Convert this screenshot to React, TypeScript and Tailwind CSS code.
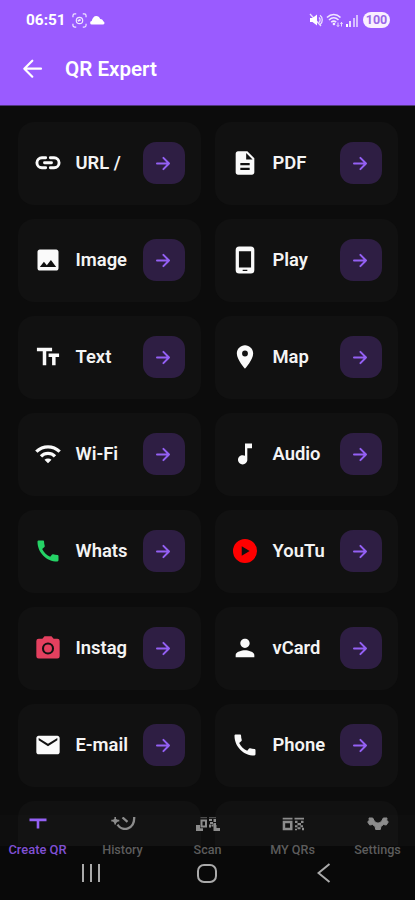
import type { ComponentType } from "react";
import {
  MdDescription,
  MdImage,
  MdTextFields,
  MdLocationOn,
  MdWifi,
  MdMusicNote,
  MdCall,
  MdPerson,
  MdMail,
} from "react-icons/md";

type Icon = ComponentType<{ className?: string }>;
type Item = { label: string; icon: Icon; color?: string };

function LinkIcon({ className }: { className?: string }) {
  return (
    <svg className={className} viewBox="0 0 24 24" fill="none" stroke="currentColor" strokeWidth="2.500" strokeLinecap="round">
      <path d="M10 7.500H6.800a4.300 4.300 0 0 0 0 8.600H10M14 7.500h3.200a4.300 4.300 0 0 1 0 8.600H14M9 11.800h6" />
    </svg>
  );
}

function PhoneDeviceIcon({ className }: { className?: string }) {
  return (
    <svg className={className} viewBox="0 0 24 24" fill="currentColor">
      <path fillRule="evenodd" d="M7 .5h10a3 3 0 0 1 3 3v17a3 3 0 0 1-3 3H7a3 3 0 0 1-3-3v-17a3 3 0 0 1 3-3ZM6.800 4.500v13.900h10.400V4.500ZM10 20.300v1.100h4v-1.100Z" />
    </svg>
  );
}

function PlayIcon({ className }: { className?: string }) {
  return (
    <svg className={className} viewBox="0 0 24 24" fill="currentColor">
      <path fillRule="evenodd" d="M12 1.700a10.300 10.300 0 1 0 0 20.600 10.300 10.300 0 0 0 0-20.600ZM9.200 7.900v8.200l6.800-4.100Z" />
    </svg>
  );
}

function CameraIcon({ className }: { className?: string }) {
  return (
    <svg className={className} viewBox="0 0 24 24" fill="currentColor">
      <path fillRule="evenodd" d="M9 2h6l1.800 2H20a2 2 0 0 1 2 2v13a2 2 0 0 1-2 2H4a2 2 0 0 1-2-2V6a2 2 0 0 1 2-2h3.200ZM12 7.200a5.200 5.200 0 1 0 0 10.400 5.200 5.200 0 0 0 0-10.400ZM12 9a3.400 3.400 0 1 1 0 6.800A3.400 3.400 0 0 1 12 9Z" />
    </svg>
  );
}

const items: Item[] = [
  { label: "URL /", icon: LinkIcon },
  { label: "PDF", icon: MdDescription },
  { label: "Image", icon: MdImage },
  { label: "Play", icon: PhoneDeviceIcon },
  { label: "Text", icon: MdTextFields },
  { label: "Map", icon: MdLocationOn },
  { label: "Wi-Fi", icon: MdWifi },
  { label: "Audio", icon: MdMusicNote },
  { label: "Whats", icon: MdCall, color: "text-[#25d366]" },
  { label: "YouTu", icon: PlayIcon, color: "text-[#ff0000]" },
  { label: "Instag", icon: CameraIcon, color: "text-[#e4405f]" },
  { label: "vCard", icon: MdPerson },
  { label: "E-mail", icon: MdMail },
  { label: "Phone", icon: MdCall },
];

function Card({ label, icon: ItemIcon, color = "text-[#fafafa]" }: Item) {
  return (
    <div className="flex h-[83px] items-center rounded-2xl bg-[#111111] pr-4 pl-4">
      <ItemIcon className={`size-[28px] shrink-0 ${color}`} />
      <span className="ml-[14px] flex-1 text-[18.400px] leading-6 font-semibold whitespace-nowrap text-[#f4f4f4]">
        {label}
      </span>
      <span className="flex size-[42px] shrink-0 items-center justify-center rounded-[13px] bg-[#2e1e43]">
        <svg className="size-[21px] text-[#9460f4]" viewBox="0 0 21 21" fill="none" stroke="currentColor" strokeWidth="2" strokeLinecap="round" strokeLinejoin="round">
          <path d="M4 10.500H16M10.400 4.900l5.600 5.600-5.600 5.600" />
        </svg>
      </span>
    </div>
  );
}

function StatusBar() {
  return (
    <div className="flex h-10 items-center pr-[25px] pl-[26px]">
      <span className="text-[15.400px] leading-5 font-bold">06:51</span>
      <svg className="ml-[6px] size-[15px]" viewBox="0 0 16 16" fill="none" stroke="currentColor" strokeOpacity=".85" strokeWidth="1.300">
        <path d="M1 4.500V3a2 2 0 0 1 2-2h1.500M11.500 1H13a2 2 0 0 1 2 2v1.500M15 11.500V13a2 2 0 0 1-2 2h-1.500M4.500 15H3a2 2 0 0 1-2-2v-1.500" />
        <circle cx="8" cy="8" r="3.400" />
        <path d="m6.200 8.500 3-1.500" strokeWidth="2" />
      </svg>
      <svg className="ml-[3px] h-[10px] w-[15px]" viewBox="0 0 15 10" fill="currentColor">
        <path d="M2 9.500a1.700 1.700 0 0 1-.3-3.400C2.400 3 4 1 6.200 1c2 0 3.300 1.300 4 3 2.200.1 2.700 1.200 3 2.300 1.700.4 1.700 3.200 0 3.200Z" />
      </svg>
      <div className="ml-auto flex items-center">
        <svg className="h-[14px] w-[14px]" viewBox="0 0 14 14" fill="currentColor">
          <path d="M1 5h2.500L8 1.500v11L3.500 9H1Z" />
          <path d="M10 4.500c1.500 1.300 1.500 3.700 0 5M11 2.300c3 2 3 7.400 0 9.400M1 1l11 12" fill="none" stroke="currentColor" strokeOpacity=".8" strokeWidth="1.300" />
        </svg>
        <svg className="ml-[3px] h-[14px] w-[18px]" viewBox="0 0 18 14" fill="none" stroke="currentColor" strokeOpacity=".85" strokeWidth="1.600">
          <path d="M1 4.500c4-4 9.500-4 13.500 0M3 7c3-2.800 6.500-2.800 9.500 0M5.200 9.200c1.700-1.400 3.400-1.400 5 0" />
          <path d="M6.400 11 8 9.600 9.500 11 8 12.600Z" fill="currentColor" stroke="none" />
          <path d="M12 9.500v4M10.800 12.300l1.200 1.200 1.200-1.200M15.500 13.500v-4M14.200 10.700l1.300-1.200 1.300 1.200" strokeWidth=".9" />
        </svg>
        <div className="ml-[2px] flex h-[13px] items-end gap-[1.300px]">
          <i className="h-[3px] w-[2px] bg-white" />
          <i className="h-[6px] w-[2px] bg-white/80" />
          <i className="h-[9px] w-[2px] bg-white/60" />
          <i className="h-[12px] w-[2px] bg-white/60" />
        </div>
        <span className="ml-[5px] flex h-4 w-[27px] items-center justify-center rounded-full bg-[#f9efff] text-[12.500px] leading-4 font-bold text-[#9a68e8]">
          100
        </span>
      </div>
    </div>
  );
}

function CreateIcon({ className }: { className?: string }) {
  return (
    <svg className={className} viewBox="0 0 30 16" fill="currentColor">
      <path d="M6.500 1.500h17v2.700h-7.200V11.500h-2.600V4.200H6.500Z" />
    </svg>
  );
}

function HistoryIcon({ className }: { className?: string }) {
  return (
    <svg className={className} viewBox="0 0 30 16" fill="none" stroke="currentColor" strokeWidth="2.300">
      <path d="M9.500 7.600C14.500 15.200 26.800 12.500 26.200 0M14.500.5l5 4.300" />
      <path d="M7.200 0v7.500M3.300 3.600h8" strokeWidth="1.600" />
      <path d="m4 3.600 3.300-2.200 3.300 2.200-3.300 3.500Z" fill="currentColor" stroke="none" />
    </svg>
  );
}

function ScanIcon({ className }: { className?: string }) {
  return (
    <svg className={className} viewBox="0 0 30 16" fill="currentColor">
      <path fillRule="evenodd" d="M7.500 2.500h6.500v8H7.500Zm2 2v4h2.500v-4ZM3 8h4v3.300h3V14H3ZM20.500 8h3v3H27V14h-6.500Z" />
      <path d="M16 2h3v2h-3ZM20.500 2h2.500v3h-2.500ZM17 5h3v2h-3ZM20.500 6H23v2h-2.500ZM16 7.500h2v3h-2ZM18.500 7.500h2v2h-2Z" />
      <path d="M7.500 0H14v1.200H7.500ZM16 0h7v1.200h-7Z" opacity=".5" />
    </svg>
  );
}

function CodesIcon({ className }: { className?: string }) {
  return (
    <svg className={className} viewBox="0 0 30 16" fill="currentColor">
      <path fillRule="evenodd" d="M4.700 3.700h9.800v9.500H4.700Zm2.500 2.500v4.500h4.800V6.200Z" />
      <path d="M4.700.8h9.800v1.700H4.700ZM16.500.8h9.500v1.700h-9.500ZM17 3.800h2.500V6H17ZM23 3.800h2.500V6H23ZM19.500 6H23v2.200h-3.500ZM17 8.200h2.500v2H17ZM22.500 8.200H25v2h-2.500ZM19.500 10.200h3v2h-3ZM17 11.800h2v1.500h-2ZM24 10.700h2v2.500h-2Z" />
    </svg>
  );
}

function SettingsIcon({ className }: { className?: string }) {
  return (
    <svg className={className} viewBox="0 0 30 16" fill="currentColor" stroke="currentColor" strokeLinejoin="round">
      <path d="M6 1h3.700L11.300 4c1.900 2.700 5.500 2.700 7.400 0L20.300 1H24l-.3 2.300 1.600 1.500-2 3.200-2.800-.5-2.600 2-.6 3h-4.600l-.6-3-2.600-2-2.800.5-2-3.200 1.600-1.500Z" />
    </svg>
  );
}

const tabs: { label: string; icon: Icon; active?: boolean }[] = [
  { label: "Create QR", icon: CreateIcon, active: true },
  { label: "History", icon: HistoryIcon },
  { label: "Scan", icon: ScanIcon },
  { label: "MY QRs", icon: CodesIcon },
  { label: "Settings", icon: SettingsIcon },
];

export default function App() {
  return (
    <div className="relative flex h-[900px] w-[415px] flex-col overflow-hidden bg-[#0c0c0c] font-[Roboto,sans-serif] text-white">
      <header className="h-[106px] shrink-0 border-b border-[#51367e] bg-[#9a5bff]">
        <StatusBar />
        <div className="flex h-[57px] items-center pl-5">
          <svg className="size-[26px]" viewBox="0 0 26 26" fill="none" stroke="currentColor" strokeWidth="2.200" strokeLinecap="round" strokeLinejoin="round">
            <path d="M21 12.700H4.500M12.300 4.700l-8 8 8 8" />
          </svg>
          <h1 className="ml-[19px] text-[20.600px] leading-7 font-semibold">QR Expert</h1>
        </div>
      </header>

      <main className="grid h-[740px] shrink-0 auto-rows-[83px] grid-cols-[183px_183px] gap-x-[14px] gap-y-[14px] overflow-hidden pt-[15.500px] pl-[17.500px]">
        {items.map((item) => (
          <Card key={item.label} {...item} />
        ))}
        <div className="rounded-2xl bg-[#111111]" />
        <div className="rounded-2xl bg-[#111111]" />
      </main>

      <div className="absolute inset-x-0 bottom-0 h-[85px]">
        <div className="h-[31px] bg-white/[0.012]" />
        <div className="h-[54px] bg-[#090909]" />
        <nav className="absolute inset-x-0 top-0 flex justify-between pt-[2px]">
          {tabs.map(({ label, icon: TabIcon, active }) => (
            <div key={label} className={`flex w-[75px] flex-col items-center ${active ? "text-[#8050d3]" : "text-[#5c5c5c]"}`}>
              <TabIcon className={`h-4 w-[30px] ${active ? "text-[#9460f4]" : "text-[#8c8c8c]"}`} />
              <span className={`mt-[9px] leading-4 font-medium whitespace-nowrap ${active ? "text-[12.900px]" : "text-[12.600px]"}`}>{label}</span>
            </div>
          ))}
        </nav>
        <div className="absolute inset-x-0 bottom-[17px] flex h-5 items-center text-[#aaaaaa]">
          <div className="ml-[82px] flex w-[18px] justify-between">
            <i className="h-[18px] w-[2px] bg-current" />
            <i className="h-[18px] w-[2px] bg-current" />
            <i className="h-[18px] w-[2px] bg-current" />
          </div>
          <div className="ml-[97px] h-[19px] w-[20px] rounded-[7px] border-2 border-current" />
          <svg className="ml-[100px] h-5 w-[14px]" viewBox="0 0 14 20" fill="none" stroke="currentColor" strokeWidth="2">
            <path d="M12.500 1 1.500 10l11 9" />
          </svg>
        </div>
      </div>
    </div>
  );
}
